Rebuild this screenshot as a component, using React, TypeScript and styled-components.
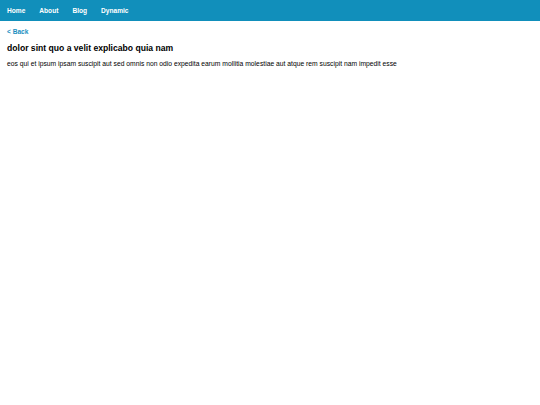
import React from 'react';
import styled, { createGlobalStyle } from 'styled-components';

const GlobalStyle = createGlobalStyle`
  body {
    margin: 0;
    background: #ffffff;
    font-family: 'Liberation Sans', Arial, sans-serif;
  }
`;

const links = ['Home', 'About', 'Blog', 'Dynamic'];

const App = () => {
  return (
    <>
      <GlobalStyle />
      <NavBar>
        {links.map((link) => (
          <NavLink key={link} href="#">
            {link}
          </NavLink>
        ))}
      </NavBar>
      <Content>
        <BackLink href="#">&lt; Back</BackLink>
        <Title>dolor sint quo a velit explicabo quia nam</Title>
        <Body>
          eos qui et ipsum ipsam suscipit aut sed omnis non odio expedita earum mollitia molestiae aut atque rem
          suscipit nam impedit esse
        </Body>
      </Content>
    </>
  );
};

export default App;

const NavBar = styled.nav`
  display: flex;
  align-items: center;
  height: 21px;
  background: #118fbb;
`;

const NavLink = styled.a`
  padding: 1px 7px 0;
  color: #ffffff;
  font-size: 6.6px;
  font-weight: 700;
  line-height: 1;
  text-decoration: none;
`;

const Content = styled.main`
  display: flex;
  flex-direction: column;
  align-items: flex-start;
  padding: 7px 7px;
`;

const BackLink = styled.a`
  color: #1a8fbf;
  font-size: 6.6px;
  font-weight: 700;
  text-decoration: none;
  margin-bottom: 8px;
`;

const Title = styled.h1`
  margin: 0 0 7px;
  font-size: 8.6px;
  font-weight: 700;
  color: #000000;
`;

const Body = styled.p`
  margin: 0;
  font-size: 6.75px;
  color: #000000;
`;
